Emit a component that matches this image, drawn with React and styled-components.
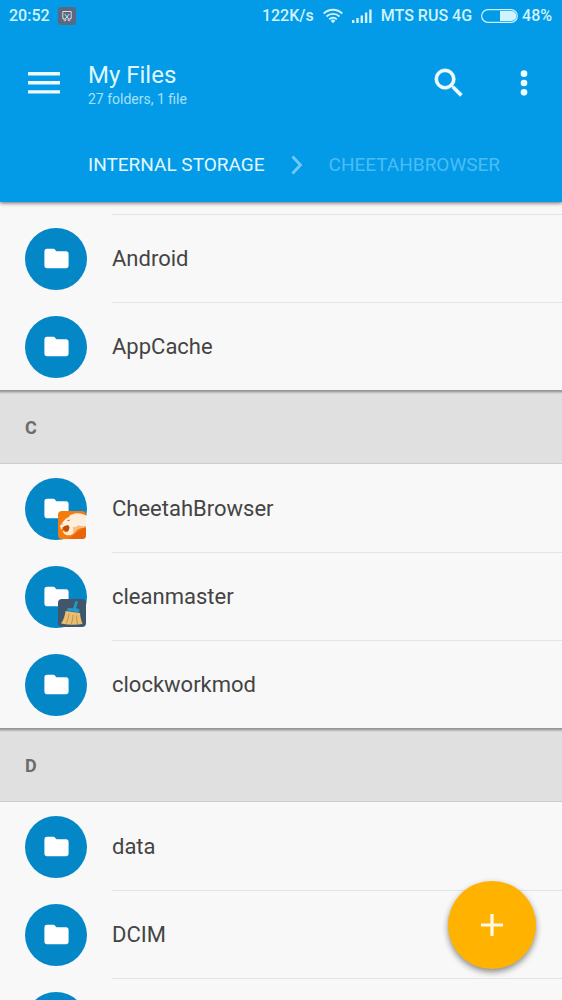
import React from "react"
import styled, { createGlobalStyle } from "styled-components"

const GlobalStyle = createGlobalStyle`
  * {
    box-sizing: border-box;
  }

  body {
    margin: 0;
    background: #f8f8f8;
    font-family: Roboto, "Noto Sans", sans-serif;
  }
`

const Screen = styled.div`
  height: 100vh;
  display: flex;
  flex-direction: column;
  overflow: hidden;
`

const Header = styled.header`
  position: relative;
  z-index: 1;
  flex: none;
  padding-bottom: 6px;
  background: #039be8;
  box-shadow: 0 1px 4px rgba(0, 0, 0, 0.6);
`

const StatusBar = styled.div`
  display: flex;
  align-items: center;
  height: 32px;
  padding: 0 10px 0 9px;
  color: #d0f3fe;
  font-size: 16px;
  font-weight: 500;
  line-height: 20px;
`

const StatusGroup = styled.div`
  display: flex;
  align-items: center;
  gap: ${({ $gap }) => $gap}px;
  margin-left: ${({ $end }) => ($end ? "auto" : "0")};
`

const Battery = styled.div`
  display: flex;
  align-items: center;
  gap: 4px;
`

const Toolbar = styled.div`
  display: flex;
  align-items: center;
  height: 102px;
  padding: 0 19px 0 25px;
`

const IconButton = styled.button`
  display: flex;
  padding: 0;
  border: 0;
  background: none;
  color: #effcff;
  cursor: pointer;
`

const Titles = styled.div`
  flex: 1;
  padding: 4px 0 0 25px;
`

const Title = styled.h1`
  margin: 0;
  color: #dff7ff;
  font-size: 24px;
  font-weight: 400;
  line-height: 28px;
`

const Subtitle = styled.p`
  margin: 0;
  color: #a5e0fb;
  font-size: 14px;
  line-height: 20px;
`

const Actions = styled.div`
  display: flex;
  gap: 37px;
`

const Breadcrumbs = styled.nav`
  display: flex;
  align-items: center;
  height: 62px;
  padding-left: 88px;
`

const Crumb = styled.a`
  color: ${({ $dim }) => ($dim ? "#4bbdf4" : "#e2f7ff")};
  font-size: 19px;
  line-height: 24px;
  text-decoration: none;
  white-space: nowrap;
`

const Separator = styled.svg`
  flex: none;
  margin: 0 26px;
`

/* starts part-way under the header, like a list that has been scrolled */
const List = styled.main`
  flex: 1;
  min-height: 0;
  margin-top: -76px;
  overflow-y: auto;
  scrollbar-width: none;
`

const SectionTitle = styled.h2`
  display: flex;
  align-items: center;
  height: 74px;
  margin: 0;
  padding: 2px 25px 0;
  border-bottom: 1px solid #cccccc;
  background: linear-gradient(#969696 1px, #b4b4b4 2px, #e0e0e0 4px);
  color: #6c6c6c;
  font-size: 18px;
  font-weight: 700;
  line-height: 24px;
`

const Rows = styled.ul`
  margin: 0;
  padding: 0;
  list-style: none;
`

const Row = styled.li`
  display: flex;
  align-items: center;
  gap: 25px;
  height: 88px;
  padding: 1px 0 0 25px;
`

const Avatar = styled.div`
  position: relative;
  flex: none;
  display: flex;
  align-items: center;
  justify-content: center;
  width: 62px;
  height: 62px;
  border-radius: 50%;
  background: #0487c7;
`

const Badge = styled.svg`
  position: absolute;
  right: 1px;
  bottom: 1px;
`

const Name = styled.div`
  flex: 1;
  display: flex;
  align-items: center;
  align-self: flex-start;
  height: 87px;
  margin-top: -1px;
  padding-top: 2px;
  border-top: 1px solid transparent;
  color: #444444;
  font-size: 22px;
  line-height: 28px;

  ${Row} + ${Row} & {
    border-top-color: #e4e4e4;
  }
`

const Fab = styled.button`
  position: fixed;
  z-index: 2;
  right: 26px;
  bottom: 31px;
  display: flex;
  align-items: center;
  justify-content: center;
  width: 88px;
  height: 88px;
  padding: 0;
  border: 0;
  border-radius: 50%;
  background: #ffb300;
  box-shadow: 0 3px 6px rgba(0, 0, 0, 0.45);
  cursor: pointer;
`

const ScreenshotIcon = () => (
  <svg width="18" height="18" viewBox="0 0 18 18" fill="none">
    <rect width="18" height="18" rx="3" fill="#5c6880" />
    <path
      d="M6 11.500H4.800v-7h8.400v7H12M6.800 7l3.900 5M11.200 7l-3.900 5"
      stroke="#d5dde8"
      strokeWidth="1"
    />
    <circle cx="6.900" cy="12.800" r="1" stroke="#d5dde8" />
    <circle cx="11.100" cy="12.800" r="1" stroke="#d5dde8" />
  </svg>
)

const WifiIcon = () => (
  <svg width="20" height="16" viewBox="0 0 20 16" fill="none">
    <g stroke="currentColor" strokeWidth="1.8">
      <path d="M.7 5.6a13.2 13.2 0 0 1 18.6 0" />
      <path d="M3.5 8.5a9.2 9.2 0 0 1 13 0" />
      <path d="M6.2 11.3a5.4 5.4 0 0 1 7.6 0" />
    </g>
    <path d="M7.7 12.7a3.3 3.3 0 0 1 4.6 0L10 15.2z" fill="currentColor" />
  </svg>
)

const SignalIcon = () => (
  <svg width="20" height="14" viewBox="0 0 20 14" fill="currentColor">
    <rect x="0" y="11" width="2.4" height="3" />
    <rect x="4.3" y="9" width="2.4" height="5" />
    <rect x="8.6" y="6.5" width="2.4" height="7.5" />
    <rect x="12.9" y="3.5" width="2.4" height="10.5" />
    <rect x="17.2" y="0.5" width="2.4" height="13.5" />
  </svg>
)

const BatteryIcon = () => (
  <svg width="37" height="14" viewBox="0 0 37 14">
    <rect x=".7" y=".7" width="35.6" height="12.6" rx="6.3" fill="none" stroke="currentColor" strokeWidth="1.2" />
    <path d="M19 2h11.300a5 5 0 0 1 0 10H19z" fill="currentColor" />
  </svg>
)

const MenuIcon = () => (
  <svg width="38" height="38" viewBox="0 0 38 38" fill="currentColor">
    <path d="M3 8h32v3.4H3zM3 17.1h32v3.4H3zM3 26.2h32v3.4H3z" />
  </svg>
)

const SearchIcon = () => (
  <svg width="38" height="38" viewBox="0 0 24 24" fill="currentColor">
    <path
      d="M15.5 14h-.79l-.28-.27A6.47 6.47 0 0 0 16 9.5 6.5 6.5 0 1 0 9.5 16c1.61 0 3.09-.59 4.23-1.57l.27.28v.79l5 4.99L20.49 19l-4.99-5zm-6 0C7.01 14 5 11.99 5 9.5S7.01 5 9.5 5 14 7.01 14 9.5 11.99 14 9.5 14z"
      stroke="currentColor"
      strokeWidth=".3"
    />
  </svg>
)

const MoreIcon = () => (
  <svg width="38" height="38" viewBox="0 0 24 24" fill="currentColor">
    <circle cx="12" cy="6.1" r="2.1" />
    <circle cx="12" cy="12" r="2.1" />
    <circle cx="12" cy="17.9" r="2.1" />
  </svg>
)

const FolderIcon = () => (
  <svg width="29" height="29" viewBox="0 0 24 24" fill="#ffffff">
    <path d="M10 4H4c-1.1 0-2 .9-2 2v12c0 1.1.9 2 2 2h16c1.1 0 2-.9 2-2V8c0-1.1-.9-2-2-2h-8z" />
  </svg>
)

const CheetahBadge = () => (
  <Badge width="28" height="28" viewBox="0 0 28 28">
    <rect width="28" height="28" rx="4" fill="#f57c0c" />
    <path d="M10 28 28 15v9a4 4 0 0 1-4 4z" fill="#e9650a" />
    <path
      d="M6.500 9c1.500-2 3-2.500 4.500-3 .5-1.700 1.500-2.500 3-2.500C18 1.500 23 2 28 4.500v11c-3.500 1.500-6 1-8.500 2.500-2 1.500-3 4-5.500 5.500-3 1.500-6.500 1-8.500-1.500l-1-2.500 2.500 1.500c2.500.8 3.800-.5 4-3.500l-.8-2-3.200.8L3 18.500 2 14.500z"
      fill="#fdeedd"
    />
    <path d="m4 17 2.500-2 3.700-1 1.300 2.300c-.3 3-1.500 4.500-4 3.900z" fill="#c44a08" />
    <path d="M14.500 16c2.500.5 4.500-.5 6-2 1.500 1 4 1.500 7.500.8v1.500c-3.500.7-6 .7-8.500 2.200-2 2-3 4-5.500 5.200 1.500-2.700 1.700-5 .5-7.700z" fill="#f8bd86" />
    <path d="m8.500 9.500 4-1-1.500 1.700zM3 13l2.200-.5L4 14z" fill="#c9742f" />
  </Badge>
)

const CleanMasterBadge = () => (
  <Badge width="28" height="28" viewBox="0 0 28 28">
    <rect width="28" height="28" rx="4" fill="#40566a" />
    <path d="m17.500 2 2.500.5-2 6.500 3.500 1.500-.5 3-12-2 .7-2.500 5.300.2z" fill="#1f9bd0" />
    <path d="M7.500 12 22 14c.3 4 1.200 7.500 2.500 11-7 1-14 1-21.500-.5 2.500-3.500 4-7.500 4.500-12.500z" fill="#e9bd72" />
    <path
      d="M11 15c-.5 4-1.500 7-3 9.500M15 16c-.2 3.500-.8 6.500-1.800 9M18.500 16.500c.2 3.500.4 6 1 8.500"
      stroke="#bd853b"
      strokeWidth=".8"
      fill="none"
    />
  </Badge>
)

const PlusIcon = () => (
  <svg width="24" height="24" viewBox="0 0 24 24">
    <path d="M12 1v22M1 12h22" stroke="#fffbe8" strokeWidth="3.200" />
  </svg>
)

const badges = {
  cheetah: CheetahBadge,
  cleanmaster: CleanMasterBadge,
}

const sections = [
  { folders: [{}, { name: "Android" }, { name: "AppCache" }] },
  {
    letter: "C",
    folders: [
      { name: "CheetahBrowser", badge: "cheetah" },
      { name: "cleanmaster", badge: "cleanmaster" },
      { name: "clockworkmod" },
    ],
  },
  { letter: "D", folders: [{ name: "data" }, { name: "DCIM" }, {}] },
]

const FolderRow = ({ name, badge }) => {
  const BadgeIcon = badges[badge]

  return (
    <Row>
      <Avatar>
        <FolderIcon />
        {BadgeIcon && <BadgeIcon />}
      </Avatar>
      <Name>{name}</Name>
    </Row>
  )
}

const App = () => {
  return (
    <Screen>
      <GlobalStyle />
      <Header>
        <StatusBar>
          <StatusGroup $gap={8}>
            <span>20:52</span>
            <ScreenshotIcon />
          </StatusGroup>
          <StatusGroup $gap={9} $end>
            <span>122K/s</span>
            <WifiIcon />
            <SignalIcon />
            <span>MTS RUS 4G</span>
            <Battery>
              <BatteryIcon />
              <span>48%</span>
            </Battery>
          </StatusGroup>
        </StatusBar>
        <Toolbar>
          <IconButton aria-label="Menu">
            <MenuIcon />
          </IconButton>
          <Titles>
            <Title>My Files</Title>
            <Subtitle>27 folders, 1 file</Subtitle>
          </Titles>
          <Actions>
            <IconButton aria-label="Search">
              <SearchIcon />
            </IconButton>
            <IconButton aria-label="More options">
              <MoreIcon />
            </IconButton>
          </Actions>
        </Toolbar>
        <Breadcrumbs>
          <Crumb href="#storage">INTERNAL STORAGE</Crumb>
          <Separator width="12" height="20" viewBox="0 0 12 20">
            <path d="m1.500 1.500 8 8.500-8 8.500" fill="none" stroke="#6fcaf7" strokeWidth="2.800" />
          </Separator>
          <Crumb href="#cheetahbrowser" $dim>
            CHEETAHBROWSER
          </Crumb>
        </Breadcrumbs>
      </Header>

      <List>
        {sections.map(({ letter, folders }, i) => (
          <section key={i}>
            {letter && <SectionTitle>{letter}</SectionTitle>}
            <Rows>
              {folders.map((folder, j) => (
                <FolderRow key={j} {...folder} />
              ))}
            </Rows>
          </section>
        ))}
      </List>

      <Fab aria-label="Add">
        <PlusIcon />
      </Fab>
    </Screen>
  )
}

export default App
